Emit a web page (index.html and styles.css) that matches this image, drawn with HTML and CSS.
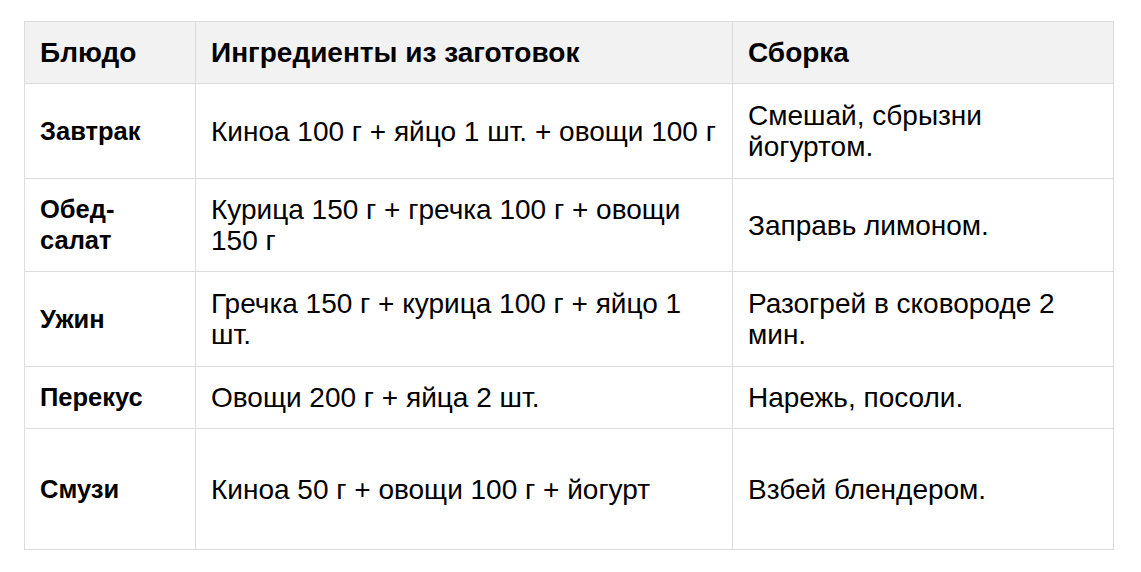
FILE: index.html
```html
<!DOCTYPE html>
<html lang="ru">
<head>
<meta charset="utf-8">
<link rel="stylesheet" href="styles.css">
</head>
<body>
<table class="meals">
  <colgroup>
    <col class="c1"><col class="c2"><col class="c3">
  </colgroup>
  <thead>
    <tr><th>Блюдо</th><th>Ингредиенты из заготовок</th><th>Сборка</th></tr>
  </thead>
  <tbody>
    <tr class="r-tall"><td class="dish">Завтрак</td><td>Киноа 100 г + яйцо 1 шт. + овощи 100 г</td><td>Смешай, сбрызни йогуртом.</td></tr>
    <tr class="r-mid"><td class="dish">Обед-салат</td><td>Курица 150 г + гречка 100 г + овощи 150 г</td><td>Заправь лимоном.</td></tr>
    <tr class="r-tall"><td class="dish">Ужин</td><td>Гречка 150 г + курица 100 г + яйцо 1 шт.</td><td>Разогрей в сковороде 2 мин.</td></tr>
    <tr><td class="dish">Перекус</td><td>Овощи 200 г + яйца 2 шт.</td><td>Нарежь, посоли.</td></tr>
    <tr class="r-last"><td class="dish">Смузи</td><td>Киноа 50 г + овощи 100 г + йогурт</td><td>Взбей блендером.</td></tr>
  </tbody>
</table>
</body>
</html>
```
FILE: styles.css
```css
html, body { background: #fff; }
body {
  margin: 21px 0 0 24px;
  font-family: "Liberation Sans", Arial, sans-serif;
  color: #000;
}
.meals {
  border-collapse: collapse;
  width: 1089px;
  table-layout: fixed;
  font-size: 28px;
  line-height: 31px;
}
.c1 { width: 171px; }
.c2 { width: 537px; }
.c3 { width: 381px; }
.meals th, .meals td {
  border: 1px solid #dcdcdc;
  padding: 15px 10px 15px 15px;
  text-align: left;
  vertical-align: middle;
}
.meals th {
  background: #f2f2f2;
  font-weight: bold;
  height: 30px;
}
.meals td.dish { font-weight: bold; font-size: 25.5px; }
.r-tall td { height: 64px; }
.r-mid td { height: 62px; }
.r-last td { height: 90px; }
```
